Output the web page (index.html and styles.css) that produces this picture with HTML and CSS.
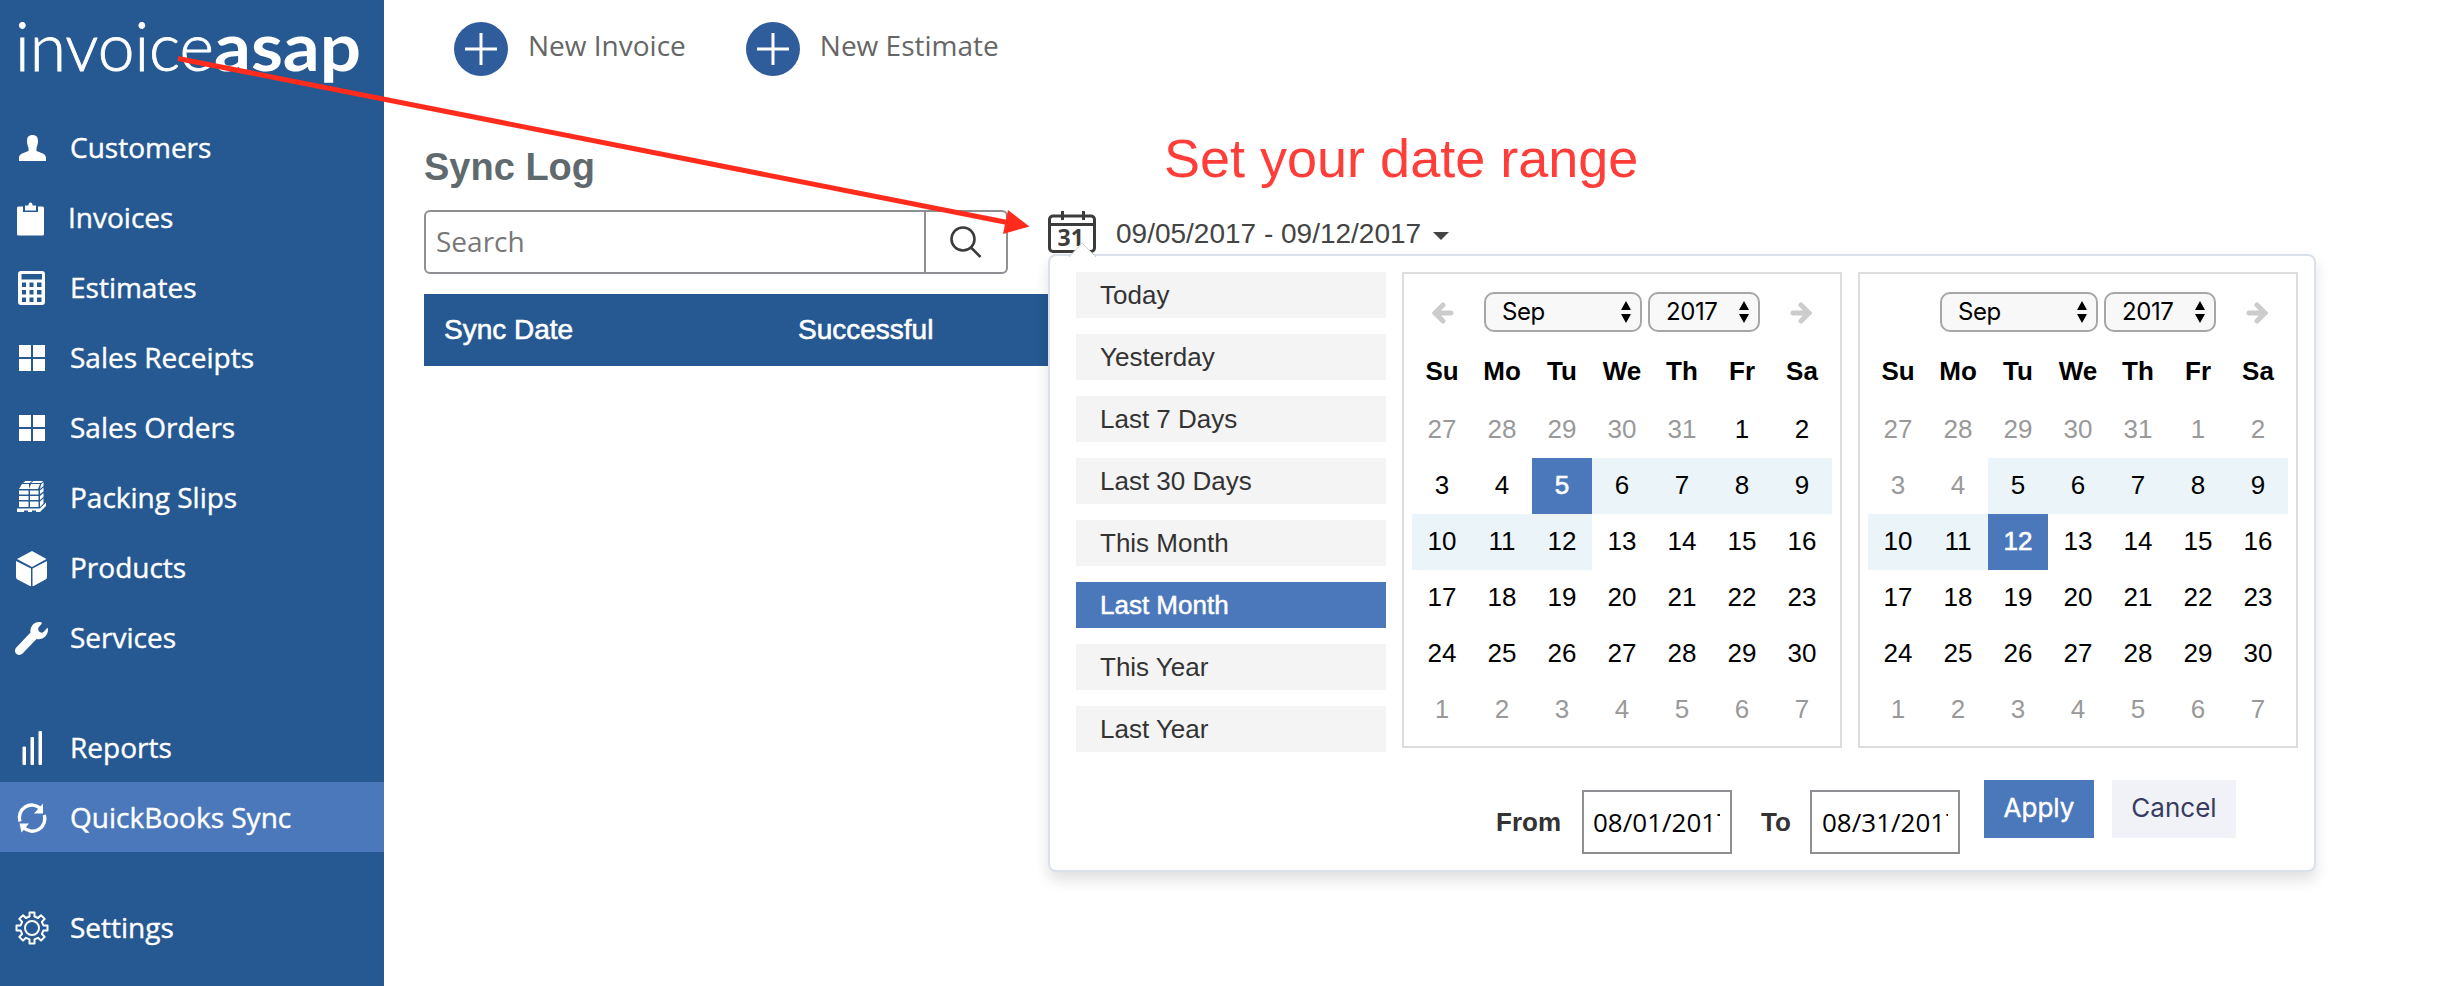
FILE: index.html
```html
<!DOCTYPE html>
<html lang="en">
<head>
    <meta charset="UTF-8">
    <meta name="viewport" content="width=device-width, initial-scale=1.0">
    <title>InvoiceASAP - Sync Log</title>
    <link rel="stylesheet" href="styles.css">
</head>
<body>
    <div class="page">
        <div class="sidebar">
            <svg class="logo" viewBox="0 0 384 112">
                <text class="logo-thin" x="15" y="71" textLength="199" lengthAdjust="spacingAndGlyphs">invoice</text>
                <text class="logo-bold" x="214" y="71" textLength="147" lengthAdjust="spacingAndGlyphs">asap</text>
            </svg>
            <ul class="nav">
                <li class="nav-item">
                    <svg class="nav-icon" viewBox="0 0 64 70"><path d="M27 29c0-4 2-6 5.500-6s5.500 2 5.500 6c0 3-1 5-1.500 7v3c3 1.500 9.500 2.500 9.500 6.500V49H19v-3.500c0-4 6.500-5 9.500-6.500v-3c-.5-2-1.500-4-1.500-7z"/></svg>
                    <span>Customers</span>
                </li>
                <li class="nav-item nudge">
                    <svg class="nav-icon" viewBox="0 0 64 70"><path d="M18.500 24.500H23V30h15v-5.500h4.500q1.500 0 1.500 1.500v26q0 1.500-1.500 1.500h-24q-1.500 0-1.500-1.500V26q0-1.500 1.500-1.500z"/><path d="M25 28.500v-5h3.500q0-3 2-3t2 3H36v5z"/></svg>
                    <span>Invoices</span>
                </li>
                <li class="nav-item">
                    <svg class="nav-icon" viewBox="0 0 64 70"><path fill-rule="evenodd" d="M21 19h21q3 0 3 3v28q0 3-3 3H21q-3 0-3-3V22q0-3 3-3zM21.500 22v5.500h20.500V22zM22 30.500V35h4v-4.500zM29.500 30.500V35h4v-4.500zM37 30.500V35h4.500v-4.500zM22 38v4.500h4V38zM29.500 38v4.500h4V38zM37 38v4.500h4.500V38zM22 45.500V50h4v-4.500zM29.500 45.500V50h4v-4.500zM37 45.500V50h4.500v-4.500z"/></svg>
                    <span>Estimates</span>
                </li>
                <li class="nav-item">
                    <svg class="nav-icon" viewBox="0 0 64 70"><path d="M19 23h12v12H19zM33 23h12v12H33zM19 37h12v12H19zM33 37h12v12H33z"/></svg>
                    <span>Sales Receipts</span>
                </li>
                <li class="nav-item">
                    <svg class="nav-icon" viewBox="0 0 64 70"><path d="M19 23h12v12H19zM33 23h12v12H33zM19 37h12v12H19zM33 37h12v12H33z"/></svg>
                    <span>Sales Orders</span>
                </li>
                <li class="nav-item">
                    <svg class="nav-icon" viewBox="0 0 64 70"><path d="M25.500 19H32l-2.500 2H23zM33.500 19h9.800L41 21H31zM22 22h7v5h-10zM31 22h9l-2 5h-9zM19 28.500h9.500v4H19zM30 28.500h8.500v4H30zM19 34h9.500v4H19zM30 34h8.500v4H30zM19 39.500h9.500v5.500H19zM30 39.500h8.500v5.500H30zM41 22.500l2.500-2.500v4L40 27zM40 28.500l3.500-3v4L40 32zM40 34l3.500-3v4L40 38zM40 39.500l3.500-3v5L40 45zM17 46.500h23l6-6V44l-6 6h-4v-1.500h-4V50h-4v-1.500h-4V50h-7z"/></svg>
                    <span>Packing Slips</span>
                </li>
                <li class="nav-item">
                    <svg class="nav-icon" viewBox="0 0 64 70"><path d="M32 19l14.500 8L32 35l-15-8zM16 29l15 7.500V54q-1 0-2-.5L17.500 47.500Q16 46.500 16 45zM47 29l-14.500 7.500V54q1 0 2-.5l11-6q1.500-1 1.500-2.500z"/></svg>
                    <span>Products</span>
                </li>
                <li class="nav-item">
                    <svg class="nav-icon" viewBox="0 0 64 70"><path d="M41 20.300c-6-1.300-11.500 4-10.500 10.200L16.300 45.500c-4 4.500 1.800 9.800 6 6.300L36.500 37c6 1.500 12-3.500 11.500-10.300-.1-1-.8-.8-1.300-.3L43.500 30c-2 2-6.500-.5-5-4.500l3-3.500c.6-.7.500-1.500-.5-1.700z"/></svg>
                    <span>Services</span>
                </li>
                <li class="nav-item gap">
                    <svg class="nav-icon" viewBox="0 0 64 70"><rect x="22.500" y="34.500" width="3.500" height="18.500" rx="1"/><rect x="30.500" y="25" width="3.500" height="28" rx="1"/><rect x="38.500" y="19" width="3.500" height="34" rx="1"/></svg>
                    <span>Reports</span>
                </li>
                <li class="nav-item active">
                    <svg class="nav-icon" viewBox="0 0 64 70"><g class="line thick"><path d="M20 39.500A12.500 12.500 0 0 1 40.500 26.500"/><path d="M44.300 33A12.500 12.500 0 0 1 23.500 45.500"/></g><path d="M43 21.500V31.500h-9zM19.500 41.500h9.500l-7.500 9z"/></svg>
                    <span>QuickBooks Sync</span>
                </li>
                <li class="nav-item gap">
                    <svg class="nav-icon" viewBox="0 0 64 70"><g class="line"><circle cx="32" cy="36" r="7"/><path d="M29.500 20.500h5v4l3.600 1.500 2.900-2.800 3.700 3.700-2.800 2.900 1.500 3.600h4.100v5h-4.100l-1.500 3.600 2.800 2.900-3.700 3.700-2.900-2.800-3.600 1.500v4.200h-5v-4.200l-3.600-1.500-2.900 2.800-3.700-3.700 2.800-2.900-1.500-3.600h-4.100v-5h4.100l1.500-3.600-2.800-2.900 3.700-3.700 2.900 2.800 3.600-1.500z"/></g></svg>
                    <span>Settings</span>
                </li>
            </ul>
        </div>

        <div class="main">
            <div class="actions">
                <a class="action">
                    <svg class="plus" viewBox="0 0 54 54"><circle cx="27" cy="27" r="27"/><path d="M11 27h32M27 11v32"/></svg>
                    <span>New Invoice</span>
                </a>
                <a class="action">
                    <svg class="plus" viewBox="0 0 54 54"><circle cx="27" cy="27" r="27"/><path d="M11 27h32M27 11v32"/></svg>
                    <span>New Estimate</span>
                </a>
            </div>

            <h1 class="title">Sync Log</h1>

            <div class="filters">
                <div class="search">
                    <input type="text" class="search-input" placeholder="Search">
                    <button class="search-button">
                        <svg class="search-icon" viewBox="0 0 34 34"><circle cx="14" cy="14" r="11.500"/><path d="M22 22.500l9.500 9.500"/></svg>
                    </button>
                </div>
                <div class="date-range">
                    <svg class="calendar-icon" viewBox="0 0 48 44"><rect x="1.500" y="6" width="45" height="35.500" rx="3.500"/><path d="M2 14.500h44M14.500 1v9M35.500 1v9"/><text x="9.500" y="36">31</text></svg>
                    <span>09/05/2017 - 09/12/2017</span>
                    <span class="caret"></span>
                </div>
            </div>

            <div class="table-head">
                <div class="col">Sync Date</div>
                <div class="col">Successful</div>
            </div>
        </div>

        <!-- Date range picker -->
        <div class="picker">
            <svg class="notch" viewBox="0 0 30 17"><path d="M1 15L14 1l14 14v2H1z"/><path class="notch-edge" d="M1 15L14 1l14 14"/></svg>
            <div class="picker-body">
                <ul class="ranges">
                    <li>Today</li>
                    <li>Yesterday</li>
                    <li>Last 7 Days</li>
                    <li>Last 30 Days</li>
                    <li>This Month</li>
                    <li class="selected">Last Month</li>
                    <li>This Year</li>
                    <li>Last Year</li>
                </ul>

                <div class="calendar">
                    <div class="cal-head">
                        <svg class="arrow" viewBox="0 0 22 24"><path d="M19 12H4M11 4l-8 8 8 8"/></svg>
                        <div class="select month">Sep<svg viewBox="0 0 12 22"><path d="M1 9l5-9 5 9zM1 13h10l-5 9z"/></svg></div>
                        <div class="select year">2017<svg viewBox="0 0 12 22"><path d="M1 9l5-9 5 9zM1 13h10l-5 9z"/></svg></div>
                        <svg class="arrow" viewBox="0 0 22 24"><path d="M3 12h15M11 4l8 8-8 8"/></svg>
                    </div>
                    <div class="week names"><b>Su</b><b>Mo</b><b>Tu</b><b>We</b><b>Th</b><b>Fr</b><b>Sa</b></div>
                    <div class="week"><i>27</i><i>28</i><i>29</i><i>30</i><i>31</i><span>1</span><span>2</span></div>
                    <div class="week"><span>3</span><span>4</span><span class="picked">5</span><span class="in-range">6</span><span class="in-range">7</span><span class="in-range">8</span><span class="in-range">9</span></div>
                    <div class="week"><span class="in-range">10</span><span class="in-range">11</span><span class="in-range">12</span><span>13</span><span>14</span><span>15</span><span>16</span></div>
                    <div class="week"><span>17</span><span>18</span><span>19</span><span>20</span><span>21</span><span>22</span><span>23</span></div>
                    <div class="week"><span>24</span><span>25</span><span>26</span><span>27</span><span>28</span><span>29</span><span>30</span></div>
                    <div class="week"><i>1</i><i>2</i><i>3</i><i>4</i><i>5</i><i>6</i><i>7</i></div>
                </div>

                <div class="calendar">
                    <div class="cal-head">
                        <span class="arrow"></span>
                        <div class="select month">Sep<svg viewBox="0 0 12 22"><path d="M1 9l5-9 5 9zM1 13h10l-5 9z"/></svg></div>
                        <div class="select year">2017<svg viewBox="0 0 12 22"><path d="M1 9l5-9 5 9zM1 13h10l-5 9z"/></svg></div>
                        <svg class="arrow" viewBox="0 0 22 24"><path d="M3 12h15M11 4l8 8-8 8"/></svg>
                    </div>
                    <div class="week names"><b>Su</b><b>Mo</b><b>Tu</b><b>We</b><b>Th</b><b>Fr</b><b>Sa</b></div>
                    <div class="week"><i>27</i><i>28</i><i>29</i><i>30</i><i>31</i><i>1</i><i>2</i></div>
                    <div class="week"><i>3</i><i>4</i><span class="in-range">5</span><span class="in-range">6</span><span class="in-range">7</span><span class="in-range">8</span><span class="in-range">9</span></div>
                    <div class="week"><span class="in-range">10</span><span class="in-range">11</span><span class="picked">12</span><span>13</span><span>14</span><span>15</span><span>16</span></div>
                    <div class="week"><span>17</span><span>18</span><span>19</span><span>20</span><span>21</span><span>22</span><span>23</span></div>
                    <div class="week"><span>24</span><span>25</span><span>26</span><span>27</span><span>28</span><span>29</span><span>30</span></div>
                    <div class="week"><i>1</i><i>2</i><i>3</i><i>4</i><i>5</i><i>6</i><i>7</i></div>
                </div>
            </div>

            <div class="picker-footer">
                <label class="from" for="from">From</label>
                <input type="text" class="date-input" id="from" value="08/01/2017">
                <label class="to" for="to">To</label>
                <input type="text" class="date-input to-input" id="to" value="08/31/2017">
                <button class="button apply">Apply</button>
                <button class="button cancel">Cancel</button>
            </div>
        </div>

        <!-- Annotation -->
        <div class="note">Set your date range</div>
        <svg class="pointer" viewBox="0 0 1040 250"><path class="pointer-line" d="M178 58.500L1010 223"/><path class="pointer-head" d="M1008 210l21.500 16.500L1003 234z"/></svg>
    </div>
</body>
</html>
```

FILE: styles.css
```css
* {
    box-sizing: border-box;
}
body {
    margin: 0;
    background-color: white;
    font-family: "Open Sans", sans-serif;
    font-size: 28px;
}
ul {
    list-style: none;
    margin: 0;
    padding: 0;
}
svg {
    display: block;
}
.page {
    position: relative;
    display: flex;
    height: 986px;
    overflow: hidden;
}

/* Sidebar */
.sidebar {
    width: 384px;
    background-color: #265891;
    color: white;
}
.logo {
    width: 384px;
    height: 112px;
    fill: white;
    font-family: Lato, sans-serif;
    font-size: 67px;
}
.logo-thin {
    font-weight: 300;
    stroke: white;
    stroke-width: 0.8px;
}
.logo-bold {
    font-weight: 700;
}
.nav-item {
    display: flex;
    align-items: center;
    height: 70px;
    -webkit-text-stroke: 0.4px white;
}
.nav-item span {
    padding-left: 6px;
    padding-bottom: 1px;
}
.nav-item.nudge span {
    padding-left: 4px;
}
.nav-item.gap {
    margin-top: 40px;
}
.nav-item.active {
    background-color: #4b78bb;
}
.nav-icon {
    width: 64px;
    height: 70px;
    fill: white;
}
.line {
    fill: none;
    stroke: white;
    stroke-width: 2;
    stroke-linejoin: round;
}
.line.thick {
    stroke-width: 3.4;
}

/* Main */
.main {
    flex: 1;
    padding-left: 40px;
}
.actions {
    display: flex;
    gap: 61px;
    padding: 22px 0 0 30px;
    color: #666;
}
.action {
    display: flex;
    height: 54px;
}
.action span {
    margin: 4px -1px 0 20px;
}
.plus {
    width: 54px;
    height: 54px;
    fill: #2f5c9a;
    stroke: white;
    stroke-width: 3;
}
.plus circle {
    stroke: none;
}
.title {
    margin: 69px 0 21px;
    font-family: "Liberation Sans", Arial, sans-serif;
    font-size: 38px;
    line-height: 44px;
    color: #606a6e;
}
.filters {
    display: flex;
    gap: 40px;
}
.search {
    display: flex;
    width: 584px;
    height: 64px;
    border: 2px solid #8e8e93;
    border-radius: 6px;
}
.search-input {
    flex: 1;
    min-width: 0;
    border: none;
    padding: 0 0 2px 10px;
    background: none;
    font-family: inherit;
    font-size: 28px;
}
.search-input::placeholder {
    color: #777;
}
.search-button {
    width: 82px;
    border: none;
    border-left: 2px solid #8e8e93;
    padding: 0 0 0 23px;
    background: none;
}
.search-icon {
    width: 34px;
    height: 34px;
    fill: none;
    stroke: #3c3c3c;
    stroke-width: 2.6;
}
.date-range {
    display: flex;
    align-items: flex-start;
    font-family: "Liberation Sans", Arial, sans-serif;
    line-height: 32px;
    color: #444;
}
.date-range span {
    margin: 8px 0 0 20px;
}
.date-range .caret {
    margin: 22px 0 0 12px;
    border: 8px solid transparent;
    border-top-color: #444;
    border-bottom: none;
}
.calendar-icon {
    width: 48px;
    height: 44px;
    fill: none;
    stroke: #3c3c3c;
    stroke-width: 3;
}
.calendar-icon text {
    fill: #3c3c3c;
    stroke: none;
    font-family: "Open Sans", sans-serif;
    font-size: 23px;
    font-weight: 700;
}
.table-head {
    display: flex;
    width: 1800px;
    height: 72px;
    margin-top: 20px;
    padding-left: 20px;
    background-color: #265891;
    color: white;
    font-family: "Liberation Sans", Arial, sans-serif;
    line-height: 72px;
    -webkit-text-stroke: 0.6px white;
}
.col {
    width: 354px;
}

/* Date range picker */
.picker {
    position: absolute;
    left: 1048px;
    top: 254px;
    width: 1268px;
    height: 618px;
    border: 2px solid #dae1eb;
    border-radius: 8px;
    background-color: white;
    box-shadow: 0 8px 14px rgba(0, 0, 0, 0.12);
    font-family: "Liberation Sans", Arial, sans-serif;
    font-size: 26px;
}
.notch {
    position: absolute;
    left: 18px;
    top: -14px;
    width: 30px;
    height: 17px;
    fill: white;
}
.notch-edge {
    fill: none;
    stroke: #ccc;
    stroke-width: 1;
}
.picker-body {
    display: flex;
    gap: 16px;
    padding: 16px 0 0 26px;
}
.ranges {
    display: flex;
    flex-direction: column;
    gap: 16px;
    width: 310px;
}
.ranges li {
    height: 46px;
    padding-left: 24px;
    background-color: #f4f4f4;
    color: #333;
    line-height: 46px;
}
.ranges li.selected {
    background-color: #4b78bb;
    color: white;
    -webkit-text-stroke: 0.5px white;
}
.calendar {
    width: 440px;
    height: 476px;
    border: 2px solid #ddd;
    padding: 12px 8px 0;
    color: black;
}
.cal-head {
    display: flex;
    align-items: center;
    height: 52px;
    padding-left: 20px;
}
.arrow {
    width: 22px;
    height: 24px;
    margin-top: 2px;
    fill: none;
    stroke: #ccc;
    stroke-width: 5;
    stroke-linecap: round;
}
.select {
    display: flex;
    align-items: center;
    justify-content: space-between;
    height: 40px;
    border: 2px solid #a6a6a6;
    border-radius: 10px;
    background-color: #f8f8f8;
    padding: 0 8px 2px 16px;
    font-family: Inter, sans-serif;
    font-size: 24px;
    letter-spacing: -0.4px;
}
.select svg {
    width: 12px;
    height: 22px;
    margin-top: 2px;
}
.month {
    width: 158px;
    margin: 0 6px 0 30px;
}
.year {
    width: 112px;
    margin-right: 30px;
}
.week {
    display: grid;
    grid-template-columns: repeat(7, 60px);
    height: 56px;
    line-height: 54px;
    text-align: center;
}
.week.names {
    height: 64px;
    line-height: 66px;
}
.week i {
    color: #999;
    font-style: normal;
}
.in-range {
    background-color: #ebf4f9;
}
.picked {
    background-color: #4b78bb;
    color: white;
    -webkit-text-stroke: 0.6px white;
}
.picker-footer {
    display: flex;
    padding: 28px 0 0 446px;
}
.picker-footer label {
    margin-top: 27px;
    color: #333;
    font-weight: bold;
    line-height: 30px;
}
.from {
    width: 86px;
}
.to {
    width: 49px;
    margin-left: 29px;
}
.date-input {
    width: 150px;
    height: 64px;
    margin-top: 10px;
    border: 2px solid #8e8e93;
    padding: 0 10px 0 9px;
    background: white;
    color: black;
    font-family: "Open Sans", sans-serif;
    font-size: 26px;
}
.to-input {
    text-indent: 1px;
}
.button {
    height: 58px;
    border: none;
    padding: 0 0 4px;
    font-family: Inter, sans-serif;
    font-size: 26px;
}
.apply {
    width: 110px;
    margin-left: 24px;
    background-color: #4b78bb;
    color: white;
    -webkit-text-stroke: 0.4px white;
}
.cancel {
    width: 124px;
    margin-left: 18px;
    background-color: #f1f2f7;
    color: #383c60;
}

/* Annotation drawn over the page */
.note {
    position: absolute;
    left: 1164px;
    top: 127px;
    font-family: "Liberation Sans", Arial, sans-serif;
    font-size: 54px;
    line-height: 62px;
    color: #ff3e3a;
}
.pointer {
    position: absolute;
    left: 0;
    top: 0;
    width: 1040px;
    height: 250px;
}
.pointer-line {
    stroke: #ff2b1d;
    stroke-width: 5;
}
.pointer-head {
    fill: #ff2b1d;
}
```
